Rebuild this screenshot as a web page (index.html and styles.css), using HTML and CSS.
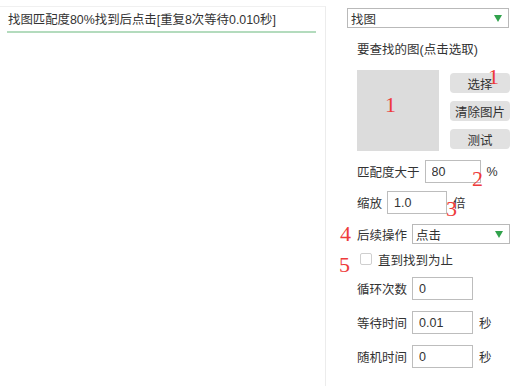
FILE: index.html
```html
<!DOCTYPE html>
<html lang="zh">
<head>
  <meta charset="UTF-8" />
  <meta name="viewport" content="width=device-width, initial-scale=1" />
  <title>找图</title>
  <link rel="stylesheet" href="styles.css">
</head>
<body>
<div class="app">
  <div class="left">
    <div class="step">找图匹配度80%找到后点击[重复8次等待0.010秒]</div>
  </div>

  <div class="right">
    <div class="select wide">
      <span>找图</span>
      <i class="arrow"></i>
    </div>

    <div class="form">
      <div class="title">要查找的图(点击选取)</div>

      <div class="pick">
        <div class="pic"><span class="mark m1a">1</span></div>
        <div class="btns">
          <button class="btn">选择</button>
          <button class="btn">清除图片</button>
          <button class="btn">测试</button>
          <span class="mark m1b">1</span>
        </div>
      </div>

      <div class="row r-match">
        <label>匹配度大于</label>
        <input class="field w56" value="80">
        <span class="unit">%</span>
        <span class="mark m2">2</span>
      </div>

      <div class="row r-zoom">
        <label>缩放</label>
        <input class="field w60" value="1.0">
        <span class="unit">倍</span>
        <span class="mark m3">3</span>
      </div>

      <div class="row r-next">
        <span class="mark m4">4</span>
        <label>后续操作</label>
        <div class="select narrow">
          <span>点击</span>
          <i class="arrow"></i>
        </div>
      </div>

      <div class="row r-check">
        <span class="mark m5">5</span>
        <span class="box"></span>
        <label>直到找到为止</label>
      </div>

      <div class="row r-loop">
        <label>循环次数</label>
        <input class="field w61" value="0">
      </div>

      <div class="row r-wait">
        <label>等待时间</label>
        <input class="field w61" value="0.01">
        <span class="unit">秒</span>
      </div>

      <div class="row r-rand">
        <label>随机时间</label>
        <input class="field w61" value="0">
        <span class="unit">秒</span>
      </div>
    </div>
  </div>
</div>
</body>
</html>
```

FILE: styles.css
```css
* { box-sizing: border-box; }
body {
  margin: 0;
  font-family: "Liberation Sans", "Noto Sans CJK SC", sans-serif;
  font-size: 12.5px;
  color: #333;
  background: #fff;
}
.app {
  display: flex;
  height: 386px;
  overflow: hidden;
}
.left {
  width: 326px;
  margin-top: 6px;
  border-top: 1px solid #f0f0f0;
  border-right: 1px solid #ececec;
  padding: 4px 9px 0 7px;
}
.step {
  font-size: 12.4px;
  line-height: 18px;
  padding-left: 1px;
  padding-bottom: 2px;
  border-bottom: 2px solid #b3dbbd;
}
.right {
  position: relative;
  padding: 8px 0 0 21px;
}
.select {
  display: flex;
  align-items: center;
  justify-content: space-between;
  height: 20px;
  border: 1px solid #b9b9b9;
  padding: 0 6px 0 3px;
  background: #fff;
}
.select.wide { width: 162px; }
.select.narrow { width: 98px; }
.arrow {
  width: 0;
  height: 0;
  border-left: 4.5px solid transparent;
  border-right: 4.5px solid transparent;
  border-top: 7px solid #31a24c;
}
.form {
  padding-left: 10px;
}
.title {
  margin-top: 12px;
  line-height: 20px;
}
.pick {
  display: flex;
  margin-top: 10px;
}
.pic {
  position: relative;
  width: 82px;
  height: 81px;
  background: #dcdcdc;
}
.btns {
  position: relative;
  display: flex;
  flex-direction: column;
  gap: 8px;
  margin: 3px 0 0 11px;
}
.btn {
  width: 60px;
  height: 20px;
  padding: 0;
  border: none;
  border-radius: 4px;
  background: #e1e1e1;
  font: inherit;
  color: #333;
}
.row {
  position: relative;
  display: flex;
  align-items: center;
}
.row label { margin-right: 5px; }
.field {
  height: 23px;
  border: 1px solid #bdbdbd;
  padding: 0 6px;
  font: inherit;
  color: #333;
}
.w56 { width: 56px; }
.w60 { width: 60px; }
.w61 { width: 61px; }
.unit { margin-left: 6px; }
.r-match { margin-top: 9px; }
.r-zoom { margin-top: 8px; }
.r-next { margin-top: 9px; height: 22px; }
.r-check { margin-top: 6px; height: 16px; }
.r-check .box {
  width: 12px;
  height: 12px;
  margin: 0 6px 0 3px;
  border: 1px solid #cfcfcf;
  border-radius: 2px;
}
.r-loop { margin-top: 10px; }
.r-wait { margin-top: 11px; }
.r-rand { margin-top: 11px; }
.mark {
  position: absolute;
  font-family: "Liberation Serif", serif;
  font-size: 22px;
  line-height: 22px;
  color: #ee3b3b;
}
.m1a { left: 28px; top: 24px; }
.m1b { left: 38px; top: -7px; }
.m2 { left: 115px; top: 8px; }
.m3 { left: 89px; top: 7px; }
.m4 { left: -17px; top: 0; }
.m5 { left: -18px; top: 3px; }
```
